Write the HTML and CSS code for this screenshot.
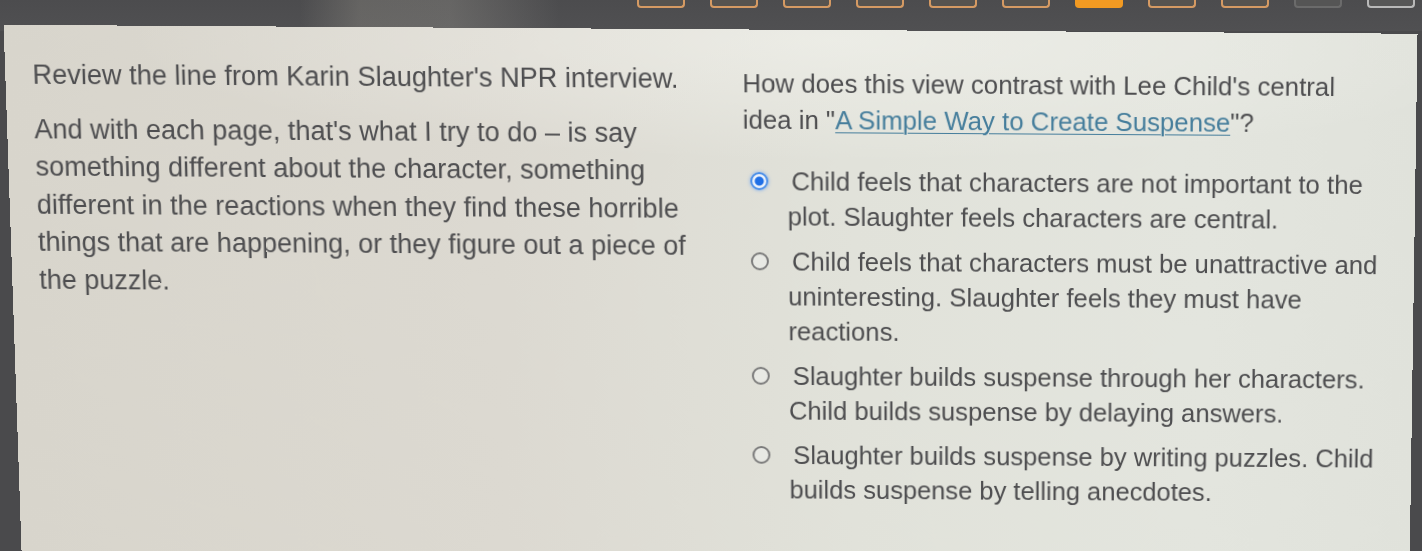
FILE: index.html
```html
<!DOCTYPE html>
<html lang="en">
<head>
<meta charset="utf-8">
<title>Question</title>
<link rel="stylesheet" href="styles.css">
</head>
<body>
  <header class="topbar">
    <nav class="steps">
      <span class="step"></span>
      <span class="step"></span>
      <span class="step"></span>
      <span class="step"></span>
      <span class="step"></span>
      <span class="step"></span>
      <span class="step step-current"></span>
      <span class="step"></span>
      <span class="step"></span>
      <span class="step step-locked"></span>
      <span class="step step-last"></span>
    </nav>
  </header>

  <main class="panel">
    <section class="passage">
      <p class="prompt">Review the line from Karin Slaughter's NPR interview.</p>
      <p class="quote">And with each page, that's what I try to do – is say something different about the character, something different in the reactions when they find these horrible things that are happening, or they figure out a piece of the puzzle.</p>
    </section>

    <section class="question">
      <p class="stem">How does this view contrast with Lee Child's central idea in "<a href="#" class="source">A Simple Way to Create Suspense</a>"?</p>
      <div class="options">
        <label class="option">
          <span class="radio radio-on"></span>
          <span class="option-text">Child feels that characters are not important to the plot. Slaughter feels characters are central.</span>
        </label>
        <label class="option">
          <span class="radio"></span>
          <span class="option-text">Child feels that characters must be unattractive and uninteresting. Slaughter feels they must have reactions.</span>
        </label>
        <label class="option">
          <span class="radio"></span>
          <span class="option-text">Slaughter builds suspense through her characters. Child builds suspense by delaying answers.</span>
        </label>
        <label class="option">
          <span class="radio"></span>
          <span class="option-text">Slaughter builds suspense by writing puzzles. Child builds suspense by telling anecdotes.</span>
        </label>
      </div>
    </section>
  </main>
</body>
</html>
```

FILE: styles.css
```css
html, body {
  margin: 0;
  height: 100%;
  overflow: hidden;
}

body {
  background: #4a4a4c;
  font-family: "Liberation Sans", Arial, sans-serif;
  color: #4e4e50;
}

/* dark header strip with the question step tabs */
.topbar {
  height: 31px;
  background:
    linear-gradient(90deg, rgba(255,255,255,0) 300px, rgba(190,185,170,0.22) 360px, rgba(220,215,200,0.18) 450px, rgba(255,255,255,0) 560px),
    linear-gradient(180deg, #4c4c4e, #505052);
  display: flex;
  justify-content: flex-end;
  padding-right: 7px;
}

.steps {
  display: flex;
  gap: 25px;
  align-items: flex-start;
}

.step {
  width: 44px;
  height: 6px;
  border: 2px solid #d59a63;
  border-top: 0;
  border-radius: 0 0 4px 4px;
  background: #56534f;
}

.step-current {
  background: #f29a22;
  border-color: #f29a22;
}

.step-locked {
  border-color: #6b6b6b;
  background: #555;
}

.step-last {
  border-color: #b9b9b9;
  background: #575757;
}

/* question card, seen slightly tilted */
.panel {
  margin: 0 8px 0 12px;
  height: 560px;
  box-sizing: border-box;
  padding: 31px 20px 0 27px;
  display: grid;
  grid-template-columns: 668px 1fr;
  column-gap: 37px;
  background:
    radial-gradient(ellipse 700px 120px at 820px 10px, rgba(245,245,240,0.55), rgba(245,245,240,0)),
    linear-gradient(90deg, #d8d5cc 0%, #dcd9d1 35%, #e1e2da 60%, #e3e5de 85%, #e0e2db 100%);
  transform: perspective(1400px) rotateX(-2.8deg) skewX(0.55deg) skewY(0.36deg);
  transform-origin: 50% 240px;
}

p {
  margin: 0;
}

.passage {
  font-size: 27px;
  line-height: 37.5px;
}

.prompt {
  margin-bottom: 16px;
}

.question {
  padding-top: 4px;
  font-size: 25.7px;
}

.stem {
  max-width: 612px;
  line-height: 36px;
}

.source {
  color: #467e9c;
  text-decoration: underline;
  text-underline-offset: 3px;
  text-decoration-thickness: 1px;
}

.options {
  margin-top: 26px;
  display: flex;
  flex-direction: column;
  gap: 10px;
}

.option {
  display: flex;
  line-height: 35px;
  cursor: pointer;
}

.radio {
  flex: none;
  box-sizing: border-box;
  width: 18px;
  height: 18px;
  margin: 8px 19px 0 7px;
  border: 2px solid #7b7b7b;
  border-radius: 50%;
  background: #e8e9e4;
}

.radio-on {
  border: 2px solid #4a8ee8;
  background: radial-gradient(circle, #1f6fe6 0 4px, #eef3fb 5px);
  box-shadow: 0 0 3px 1px rgba(120,170,240,0.55);
}

.option-text {
  text-indent: 4px;
}
```
